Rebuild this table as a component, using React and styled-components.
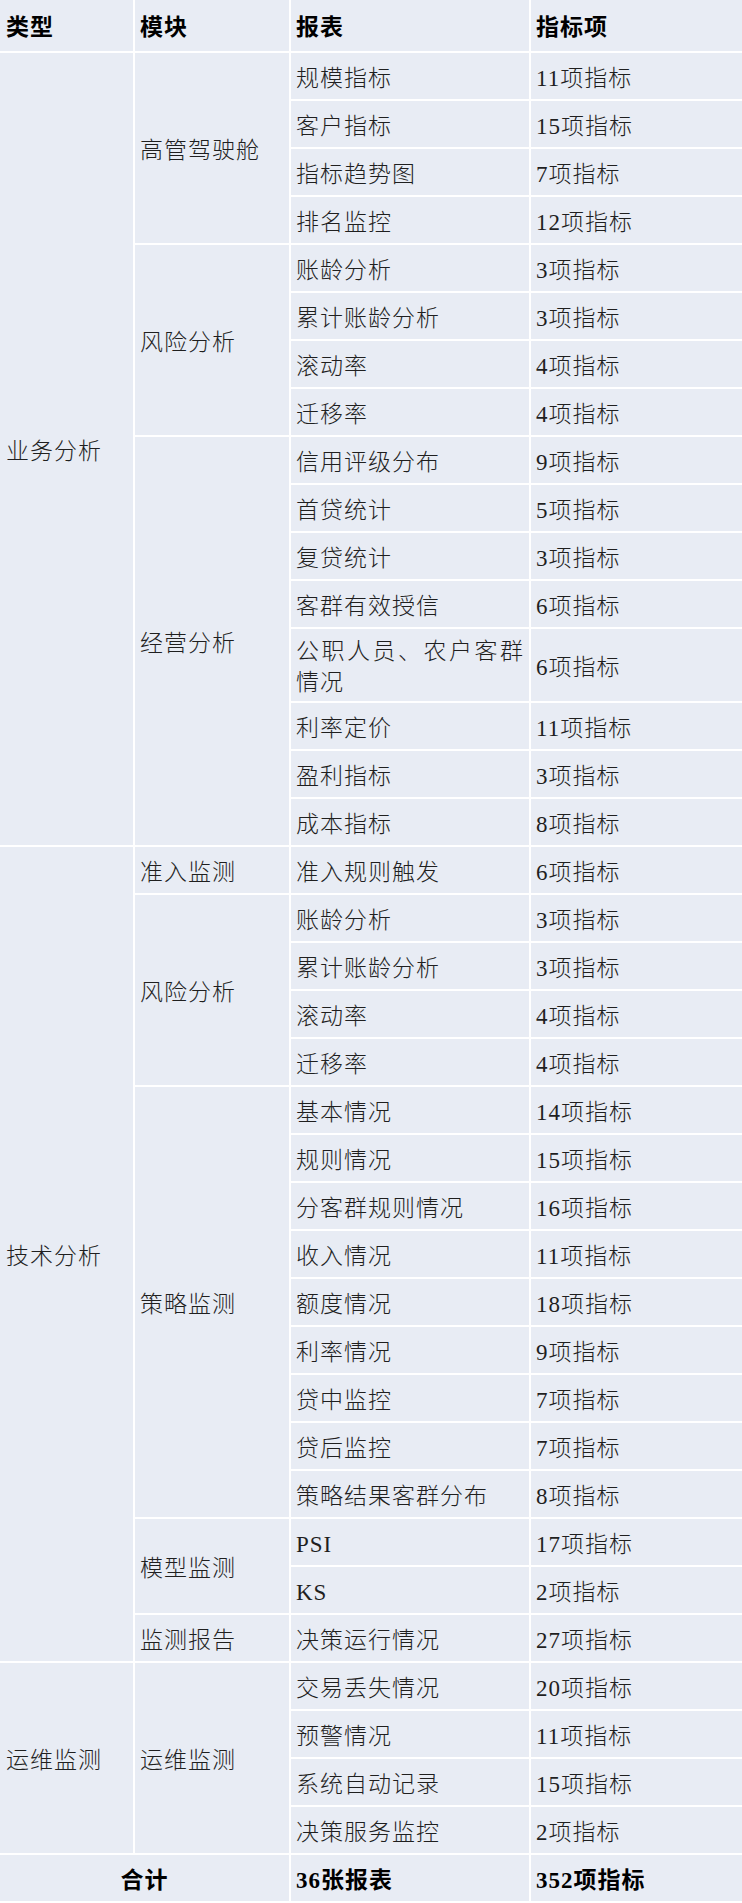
import React from "react";
import styled, { createGlobalStyle } from "styled-components";

const GlobalStyle = createGlobalStyle`
  html, body {
    margin: 0;
    padding: 0;
    background: #ffffff;
  }
  body {
    font-family: "Liberation Serif", "Noto Sans CJK SC", serif;
  }
`;

const groups = [
  {
    type: "业务分析",
    modules: [
      {
        name: "高管驾驶舱",
        reports: [
          ["规模指标", "11项指标"],
          ["客户指标", "15项指标"],
          ["指标趋势图", "7项指标"],
          ["排名监控", "12项指标"],
        ],
      },
      {
        name: "风险分析",
        reports: [
          ["账龄分析", "3项指标"],
          ["累计账龄分析", "3项指标"],
          ["滚动率", "4项指标"],
          ["迁移率", "4项指标"],
        ],
      },
      {
        name: "经营分析",
        reports: [
          ["信用评级分布", "9项指标"],
          ["首贷统计", "5项指标"],
          ["复贷统计", "3项指标"],
          ["客群有效授信", "6项指标"],
          ["公职人员、农户客群情况", "6项指标"],
          ["利率定价", "11项指标"],
          ["盈利指标", "3项指标"],
          ["成本指标", "8项指标"],
        ],
      },
    ],
  },
  {
    type: "技术分析",
    modules: [
      { name: "准入监测", reports: [["准入规则触发", "6项指标"]] },
      {
        name: "风险分析",
        reports: [
          ["账龄分析", "3项指标"],
          ["累计账龄分析", "3项指标"],
          ["滚动率", "4项指标"],
          ["迁移率", "4项指标"],
        ],
      },
      {
        name: "策略监测",
        reports: [
          ["基本情况", "14项指标"],
          ["规则情况", "15项指标"],
          ["分客群规则情况", "16项指标"],
          ["收入情况", "11项指标"],
          ["额度情况", "18项指标"],
          ["利率情况", "9项指标"],
          ["贷中监控", "7项指标"],
          ["贷后监控", "7项指标"],
          ["策略结果客群分布", "8项指标"],
        ],
      },
      {
        name: "模型监测",
        reports: [
          ["PSI", "17项指标"],
          ["KS", "2项指标"],
        ],
      },
      { name: "监测报告", reports: [["决策运行情况", "27项指标"]] },
    ],
  },
  {
    type: "运维监测",
    modules: [
      {
        name: "运维监测",
        reports: [
          ["交易丢失情况", "20项指标"],
          ["预警情况", "11项指标"],
          ["系统自动记录", "15项指标"],
          ["决策服务监控", "2项指标"],
        ],
      },
    ],
  },
];

export default function App() {
  const cells = [];
  let row = 2;

  groups.forEach((group, gi) => {
    const groupStart = row;
    group.modules.forEach((mod, mi) => {
      const modStart = row;
      mod.reports.forEach(([report, count], ri) => {
        cells.push(
          <Cell key={`r-${gi}-${mi}-${ri}`} $col={3} $row={row} $justify>
            {report}
          </Cell>
        );
        cells.push(
          <Cell key={`c-${gi}-${mi}-${ri}`} $col={4} $row={row}>
            {count}
          </Cell>
        );
        row += 1;
      });
      cells.push(
        <Cell key={`m-${gi}-${mi}`} $col={2} $row={modStart} $span={row - modStart}>
          {mod.name}
        </Cell>
      );
    });
    cells.push(
      <Cell key={`g-${gi}`} $col={1} $row={groupStart} $span={row - groupStart} $first>
        {group.type}
      </Cell>
    );
  });

  return (
    <>
      <GlobalStyle />
      <Sheet>
        <HeadCell $col={1} $row={1} $first>类型</HeadCell>
        <HeadCell $col={2} $row={1}>模块</HeadCell>
        <HeadCell $col={3} $row={1}>报表</HeadCell>
        <HeadCell $col={4} $row={1}>指标项</HeadCell>
        {cells}
        <TotalCell $col={1} $row={row} $wide>合计</TotalCell>
        <TotalCell $col={3} $row={row}>36张报表</TotalCell>
        <TotalCell $col={4} $row={row}>352项指标</TotalCell>
      </Sheet>
    </>
  );
}

const Sheet = styled.div`
  display: grid;
  grid-template-columns: 133px 154px 238px 211px;
  grid-template-rows: 51px;
  grid-auto-rows: minmax(46px, auto);
  gap: 2px;
  width: 742px;
  padding-bottom: 2px;
  background: #ffffff;
  color: #1f1f1f;
  font-size: 23px;
  font-weight: 300;
  letter-spacing: 1px;
`;

const Cell = styled.div`
  grid-column: ${(p) => p.$col};
  grid-row: ${(p) => p.$row} / span ${(p) => p.$span || 1};
  display: flex;
  align-items: center;
  padding: 7px 5px 3px ${(p) => (p.$first ? "6px" : "5px")};
  line-height: 31px;
  background: #e8ecf4;
  text-align: ${(p) => (p.$justify ? "justify" : "left")};
  box-sizing: border-box;
  word-break: break-all;
`;

const HeadCell = styled(Cell)`
  font-weight: 700;
  color: #000000;
`;

const TotalCell = styled(Cell)`
  grid-column: ${(p) => (p.$wide ? "1 / span 2" : p.$col)};
  justify-content: ${(p) => (p.$wide ? "center" : "flex-start")};
  font-weight: 700;
  color: #000000;
`;
